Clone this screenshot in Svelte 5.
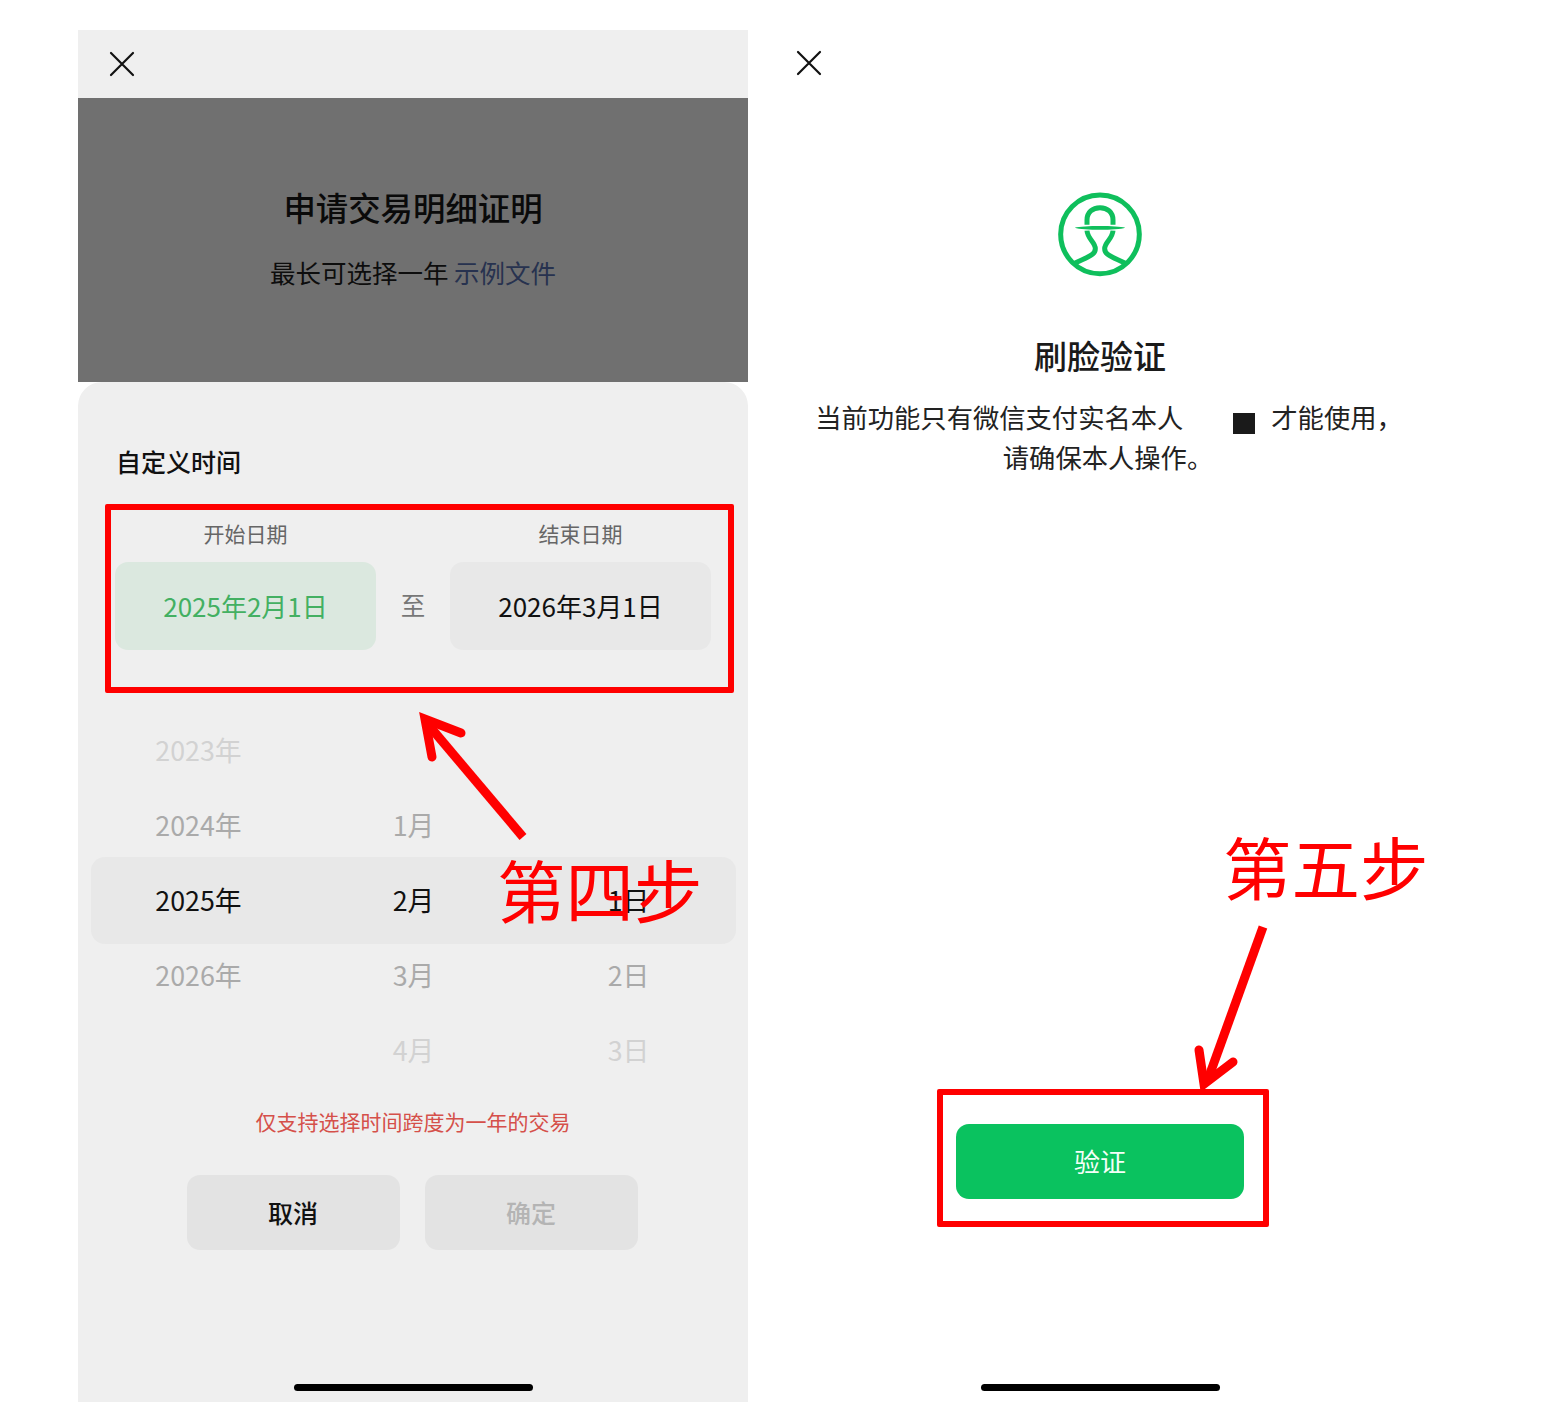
<script>
  const rows = [
    { y: '2023年', m: '', d: '', tone: 'far' },
    { y: '2024年', m: '1月', d: '', tone: 'near' },
    { y: '2025年', m: '2月', d: '1日', tone: 'sel' },
    { y: '2026年', m: '3月', d: '2日', tone: 'near' },
    { y: '', m: '4月', d: '3日', tone: 'far' }
  ];
</script>

<div class="page">
  <section class="phone left">
    <header class="bar grey">
      <svg class="close" viewBox="0 0 26 26" aria-hidden="true"><path d="M2 2 24 24M24 2 2 24" /></svg>
    </header>
    <div class="hero">
      <h1>申请交易明细证明</h1>
      <p>最长可选择一年 <span class="link">示例文件</span></p>
    </div>
    <div class="sheet">
      <h2>自定义时间</h2>
      <div class="dates">
        <div class="label">开始日期</div><div></div><div class="label">结束日期</div>
        <div class="card on">2025年2月1日</div><div class="to">至</div><div class="card">2026年3月1日</div>
      </div>
      <div class="picker">
        {#each rows as r}
          <div class="row {r.tone}"><span>{r.y}</span><span>{r.m}</span><span>{r.d}</span></div>
        {/each}
      </div>
      <div class="err">仅支持选择时间跨度为一年的交易</div>
      <div class="actions">
        <div class="btn">取消</div>
        <div class="btn off">确定</div>
      </div>
      <div class="home"></div>
    </div>
  </section>

  <section class="phone right">
    <header class="bar">
      <svg class="close r" viewBox="0 0 26 26" aria-hidden="true"><path d="M2 2 24 24M24 2 2 24" /></svg>
    </header>
    <svg class="logo" viewBox="0 0 360 330" aria-hidden="true">
      <circle cx="180" cy="163" r="118" />
      <path d="M141 134V120C141 96 158 83 180 83C202 83 219 96 219 120V134" />
      <path class="brim" d="M104 143C130 136 230 136 256 143C230 151 130 151 104 143Z" />
      <path d="M141 152C143 178 166 186 166 206C166 226 140 232 104 250" />
      <path d="M219 152C217 178 194 186 194 206C194 226 220 232 256 250" />
    </svg>
    <h1 class="face">刷脸验证</h1>
    <div class="desc">
      <div class="l1">当前功能只有微信支付实名本人<i class="sq"></i>才能使用，</div>
      <div class="l2">请确保本人操作。</div>
    </div>
    <div class="verify">验证</div>
    <div class="home"></div>
  </section>

  <!-- annotations painted over the screenshots -->
  <div class="mark m1"></div>
  <div class="mark m2"></div>
  <div class="step s4">第四步</div>
  <div class="step s5">第五步</div>
  <svg class="arrows" viewBox="0 0 1543 1402" aria-hidden="true">
    <path class="shaft" d="M523 837 426 722" />
    <path d="M461 733 425 719 432 757" />
    <path class="shaft" d="M1263 927 1207 1082" />
    <path d="M1199 1050 1204 1084 1233 1062" />
  </svg>
</div>

<style>
  :global(body) { margin: 0; background: #fff; }
  .page {
    position: relative;
    display: flex;
    gap: 17px;
    height: 1402px;
    box-sizing: border-box;
    padding: 30px 0 0 78px;
    overflow: hidden;
    background: #fff;
    color: #111;
    font-family: "Noto Sans CJK SC", "Noto Sans", sans-serif;
  }
  .phone { width: 670px; display: flex; flex-direction: column; }
  .right { align-items: center; }
  .bar { height: 68px; flex: none; align-self: stretch; display: flex; align-items: center; }
  .grey { background: #efefef; }
  .close { width: 26px; height: 26px; margin-left: 31px; fill: none; stroke: #111; stroke-width: 2.200; stroke-linecap: round; }
  .close.r { margin-top: -3px; }
  .hero { height: 284px; flex: none; background: #707070; text-align: center; }
  h1 { margin: 0; font-weight: 500; }
  .hero h1 { font-size: 32.400px; line-height: 48px; margin-top: 85px; color: #0a0a0a; }
  .hero p { margin: 21px 0 0; font-size: 25.500px; line-height: 40px; color: #0d0d0d; }
  .link { color: #27324f; }
  .sheet {
    flex: 1;
    display: flex;
    flex-direction: column;
    background: #efefef;
    border-radius: 24px 24px 0 0;
  }
  h2 { margin: 61px 0 0 38px; font-size: 25px; line-height: 36px; font-weight: 500; color: #111; }
  .dates {
    display: grid;
    grid-template-columns: 261px 74px 261px;
    grid-template-rows: 30px 88px;
    row-gap: 14px;
    margin: 39px 0 0 37px;
    text-align: center;
  }
  .label { font-size: 21px; line-height: 30px; color: #666; }
  .card {
    display: flex; align-items: center; justify-content: center;
    padding-bottom: 2px; box-sizing: border-box;
    border-radius: 13px; background: #e8e8e8;
    font-size: 26px; color: #111;
  }
  .card.on { background: #dbe8df; color: #43b062; }
  .to { align-self: center; font-size: 24.500px; line-height: 36px; margin-top: -2px; color: #777; }
  .picker { margin: 63px 12px 0 13px; }
  .row {
    position: relative;
    display: grid;
    grid-template-columns: repeat(3, 1fr);
    height: 75px;
    align-items: center;
    text-align: center;
    font-size: 26.800px;
  }
  .row span { position: relative; top: -1px; }
  .row.sel { color: #111; }
  .row.sel::before {
    content: "";
    position: absolute;
    inset: -6px 0;
    border-radius: 14px;
    background: #e8e8e8;
  }
  .row.near { color: #aaa; }
  .row.far { color: #d2d2d2; }
  .err { margin-top: 18px; text-align: center; font-size: 21px; line-height: 30px; color: #d5504a; }
  .actions { display: flex; justify-content: center; gap: 25px; margin: 39px 2px 0 0; }
  .btn {
    width: 213px; height: 75px;
    display: flex; align-items: center; justify-content: center;
    padding-bottom: 2px; box-sizing: border-box;
    border-radius: 13px; background: #e3e3e3;
    font-size: 25px; font-weight: 500; color: #111;
  }
  .btn.off { color: #b4b4b4; }
  .home {
    width: 239px; height: 7px; flex: none;
    align-self: center;
    margin-top: auto; margin-bottom: 11px;
    border-radius: 4px; background: #000;
  }
  .logo { width: 120px; height: 110px; margin-top: 82px; fill: none; stroke: #0fbf5c; stroke-width: 15; }
  .logo .brim { fill: #0fbf5c; stroke: none; }
  .face { margin-top: 41px; font-size: 33px; line-height: 48px; font-weight: 500; color: #1a1a1a; }
  .desc { margin-top: 18px; width: 670px; text-align: center; font-size: 26.300px; line-height: 40px; color: #222; }
  .l1 { white-space: nowrap; margin-left: 18px; }
  .l2 { margin-left: 16px; }
  .sq { display: inline-block; width: 22px; height: 21px; margin: 0 16px 0 50px; background: #1a1a1a; vertical-align: -6px; }
  .verify {
    margin-top: 647px;
    width: 288px; height: 75px;
    display: flex; align-items: center; justify-content: center;
    padding-bottom: 2px; box-sizing: border-box;
    border-radius: 13px; background: #0ac25f;
    font-size: 26px; color: #f4fff8;
  }
  .mark { position: absolute; box-sizing: border-box; border: 6px solid #f00; border-radius: 2px; }
  .m1 { left: 105px; top: 504px; width: 629px; height: 189px; }
  .m2 { left: 937px; top: 1089px; width: 332px; height: 138px; border-width: 6.500px; }
  .step { position: absolute; font-size: 68.500px; font-weight: 400; line-height: 80px; color: #f00; white-space: nowrap; }
  .s4 { left: 497px; top: 849px; }
  .s5 { left: 1223px; top: 826px; }
  .arrows {
    position: absolute; left: 0; top: 0; width: 1543px; height: 1402px;
    fill: none; stroke: #f00; stroke-width: 9; stroke-linecap: round; stroke-linejoin: miter;
    pointer-events: none;
  }
  .arrows .shaft { stroke-linecap: butt; }
</style>
